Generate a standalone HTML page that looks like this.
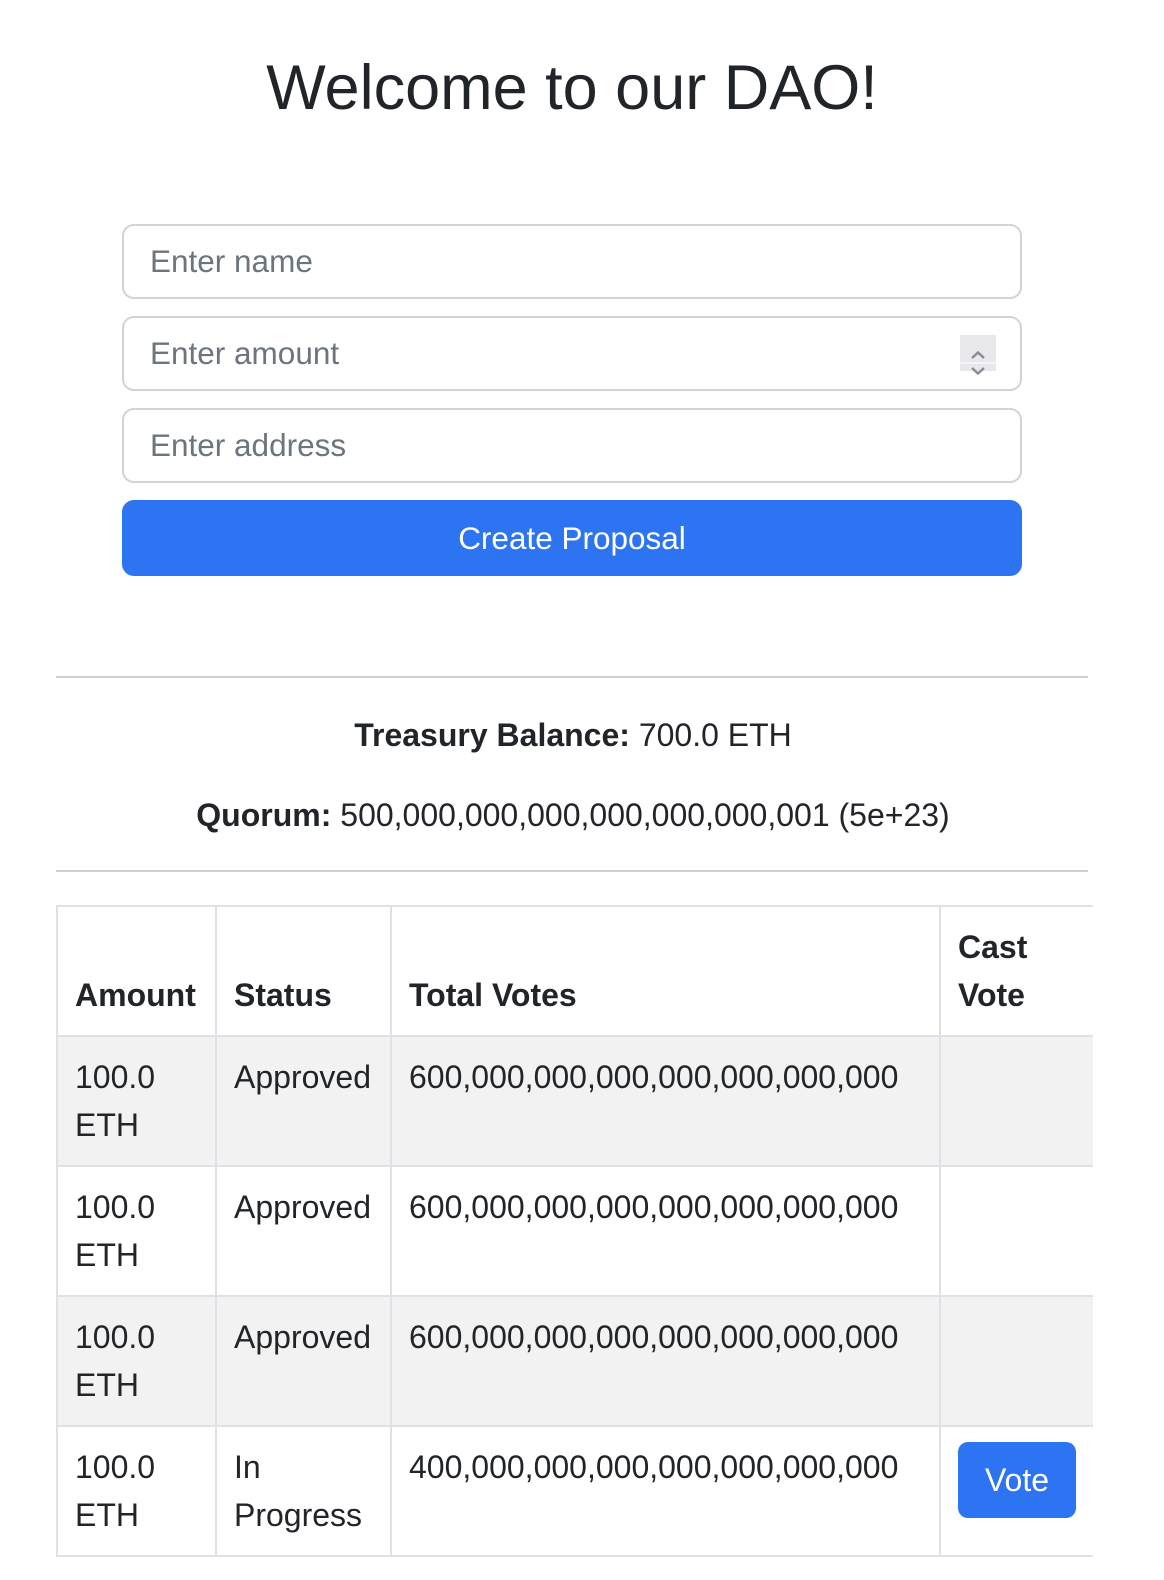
<!DOCTYPE html>
<html><head><meta charset="utf-8"><style>
*{box-sizing:border-box;margin:0;padding:0}
body{width:1164px;height:1580px;background:#fff;font-family:"Liberation Sans",sans-serif;color:#212529;position:relative;overflow:hidden}
.a{position:absolute}
h1{position:absolute;left:0;width:1144px;top:50px;text-align:center;font-size:63px;font-weight:400;line-height:76px;color:#212529}
.inp{position:absolute;left:122px;width:900px;height:75px;border:2px solid #ced4da;border-radius:12px;font-size:31.5px;color:#6c757d;padding-left:26px;line-height:71px}
.btn{position:absolute;left:122px;top:500px;width:900px;height:76px;background:#2d74f2;border-radius:12px;color:#fff;font-size:31.5px;text-align:center;line-height:76px}
.hr{position:absolute;left:56px;width:1032px;height:2px;background:#cfcfcf}
.ctr{position:absolute;left:0;width:1146px;text-align:center;font-size:32px;line-height:40px}
table{position:absolute;left:56px;top:905px;border-collapse:collapse;font-size:32px;line-height:48px}
td,th{border:2px solid #dee2e6;padding:16px 17px;vertical-align:top;text-align:left}
th{vertical-align:bottom;font-weight:700}
tr.s td{background:#f2f2f2}
tr>:last-child{border-right:none}
.vote{display:inline-block;background:#2d74f2;color:#fff;border-radius:10px;width:118px;height:76px;line-height:76px;text-align:center;margin-top:-1px}
</style></head><body>
<h1>Welcome to our DAO!</h1>
<div class="inp" style="top:224px">Enter name</div>
<div class="inp" style="top:316px">Enter amount
<div class="a" style="right:24px;top:17px;width:36px;height:36px;background:#e8e8ec">
<svg width="36" height="36" viewBox="0 0 36 36"><path d="M12 13l6-5.5 6 5.5M12 23l6 5.5 6-5.5" fill="none" stroke="#8a8a92" stroke-width="2.4"/><line x1="0" y1="18" x2="36" y2="18" stroke="#fff" stroke-width="1"/></svg></div></div>
<div class="inp" style="top:408px">Enter address</div>
<div class="btn">Create Proposal</div>
<div class="hr" style="top:676px"></div>
<div class="ctr" style="top:715px"><b>Treasury Balance:</b> 700.0 ETH</div>
<div class="ctr" style="top:795px"><b>Quorum:</b> 500,000,000,000,000,000,000,001 (5e+23)</div>
<div class="hr" style="top:870px"></div>
<table>
<tr style="height:130px"><th style="width:159px">Amount</th><th style="width:175px">Status</th><th style="width:549px">Total Votes</th><th style="width:145px">Cast<br>Vote</th></tr>
<tr class="s" style="height:130px"><td>100.0<br>ETH</td><td>Approved</td><td>600,000,000,000,000,000,000,000</td><td></td></tr>
<tr style="height:130px"><td>100.0<br>ETH</td><td>Approved</td><td>600,000,000,000,000,000,000,000</td><td></td></tr>
<tr class="s" style="height:130px"><td>100.0<br>ETH</td><td>Approved</td><td>600,000,000,000,000,000,000,000</td><td></td></tr>
<tr style="height:130px"><td>100.0<br>ETH</td><td>In<br>Progress</td><td>400,000,000,000,000,000,000,000</td><td><span class="vote">Vote</span></td></tr>
</table>
</body></html>
